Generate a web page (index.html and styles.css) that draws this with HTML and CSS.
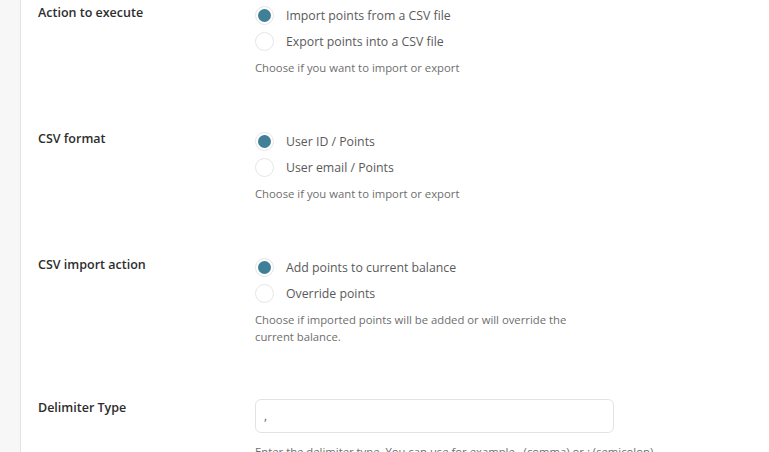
FILE: index.html
```html
<!DOCTYPE html>
<html>
<head>
<meta charset="utf-8">
<link rel="stylesheet" href="styles.css">
</head>
<body>
<div class="panel">
  <div class="row">
    <div class="label">Action to execute</div>
    <div class="field">
      <label class="opt"><span class="radio checked"></span>Import points from a CSV file</label>
      <label class="opt"><span class="radio"></span>Export points into a CSV file</label>
      <p class="desc">Choose if you want to import or export</p>
    </div>
  </div>
  <div class="row">
    <div class="label">CSV format</div>
    <div class="field">
      <label class="opt"><span class="radio checked"></span>User ID / Points</label>
      <label class="opt"><span class="radio"></span>User email / Points</label>
      <p class="desc">Choose if you want to import or export</p>
    </div>
  </div>
  <div class="row">
    <div class="label">CSV import action</div>
    <div class="field">
      <label class="opt"><span class="radio checked"></span>Add points to current balance</label>
      <label class="opt"><span class="radio"></span>Override points</label>
      <p class="desc">Choose if imported points will be added or will override the<br>current balance.</p>
    </div>
  </div>
  <div class="row">
    <div class="label">Delimiter Type</div>
    <div class="field input-field">
      <div class="input">,</div>
      <p class="desc desc-input">Enter the delimiter type. You can use for example , (comma) or ; (semicolon)</p>
    </div>
  </div>
</div>
</body>
</html>
```
FILE: styles.css
```css
html, body {
  margin: 0;
  padding: 0;
}
body {
  background: #f7f7f7;
  font-family: "Open Sans", "Noto Sans", sans-serif;
  overflow: hidden;
  height: 452px;
}
.panel {
  margin-left: 20px;
  border-left: 1px solid #e4e4e4;
  background: #fff;
  min-height: 520px;
  padding-top: 2px;
  display: flex;
  flex-direction: column;
  gap: 52px;
}
.row {
  display: flex;
  align-items: flex-start;
}
.label {
  width: 217px;
  padding-left: 17px;
  font-size: 12.5px;
  font-weight: 600;
  color: #2d2d2d;
  line-height: 20px;
  margin-top: 1px;
}
.field {
  display: flex;
  flex-direction: column;
}
.opt {
  display: flex;
  align-items: center;
  height: 26px;
  font-size: 12.3px;
  color: #5a5a5a;
}
.radio {
  box-sizing: border-box;
  width: 19px;
  height: 19px;
  border-radius: 50%;
  border: 1px solid #e6e6e6;
  background: #fff;
  margin-right: 12px;
  display: flex;
  align-items: center;
  justify-content: center;
}
.radio.checked::after {
  content: "";
  width: 13px;
  height: 13px;
  border-radius: 50%;
  background: #3f7f97;
}
.desc {
  margin: 5px 0 0;
  font-size: 11.3px;
  line-height: 17px;
  color: #6e6e6e;
}
.input-field {
  padding-top: 2px;
}
.input {
  box-sizing: border-box;
  width: 359px;
  height: 34px;
  border: 1px solid #e3e3e3;
  border-radius: 6px;
  padding: 9px 8px;
  font-size: 12px;
  color: #666;
  line-height: 14px;
}
.desc-input {
  margin-top: 10px;
}
```
